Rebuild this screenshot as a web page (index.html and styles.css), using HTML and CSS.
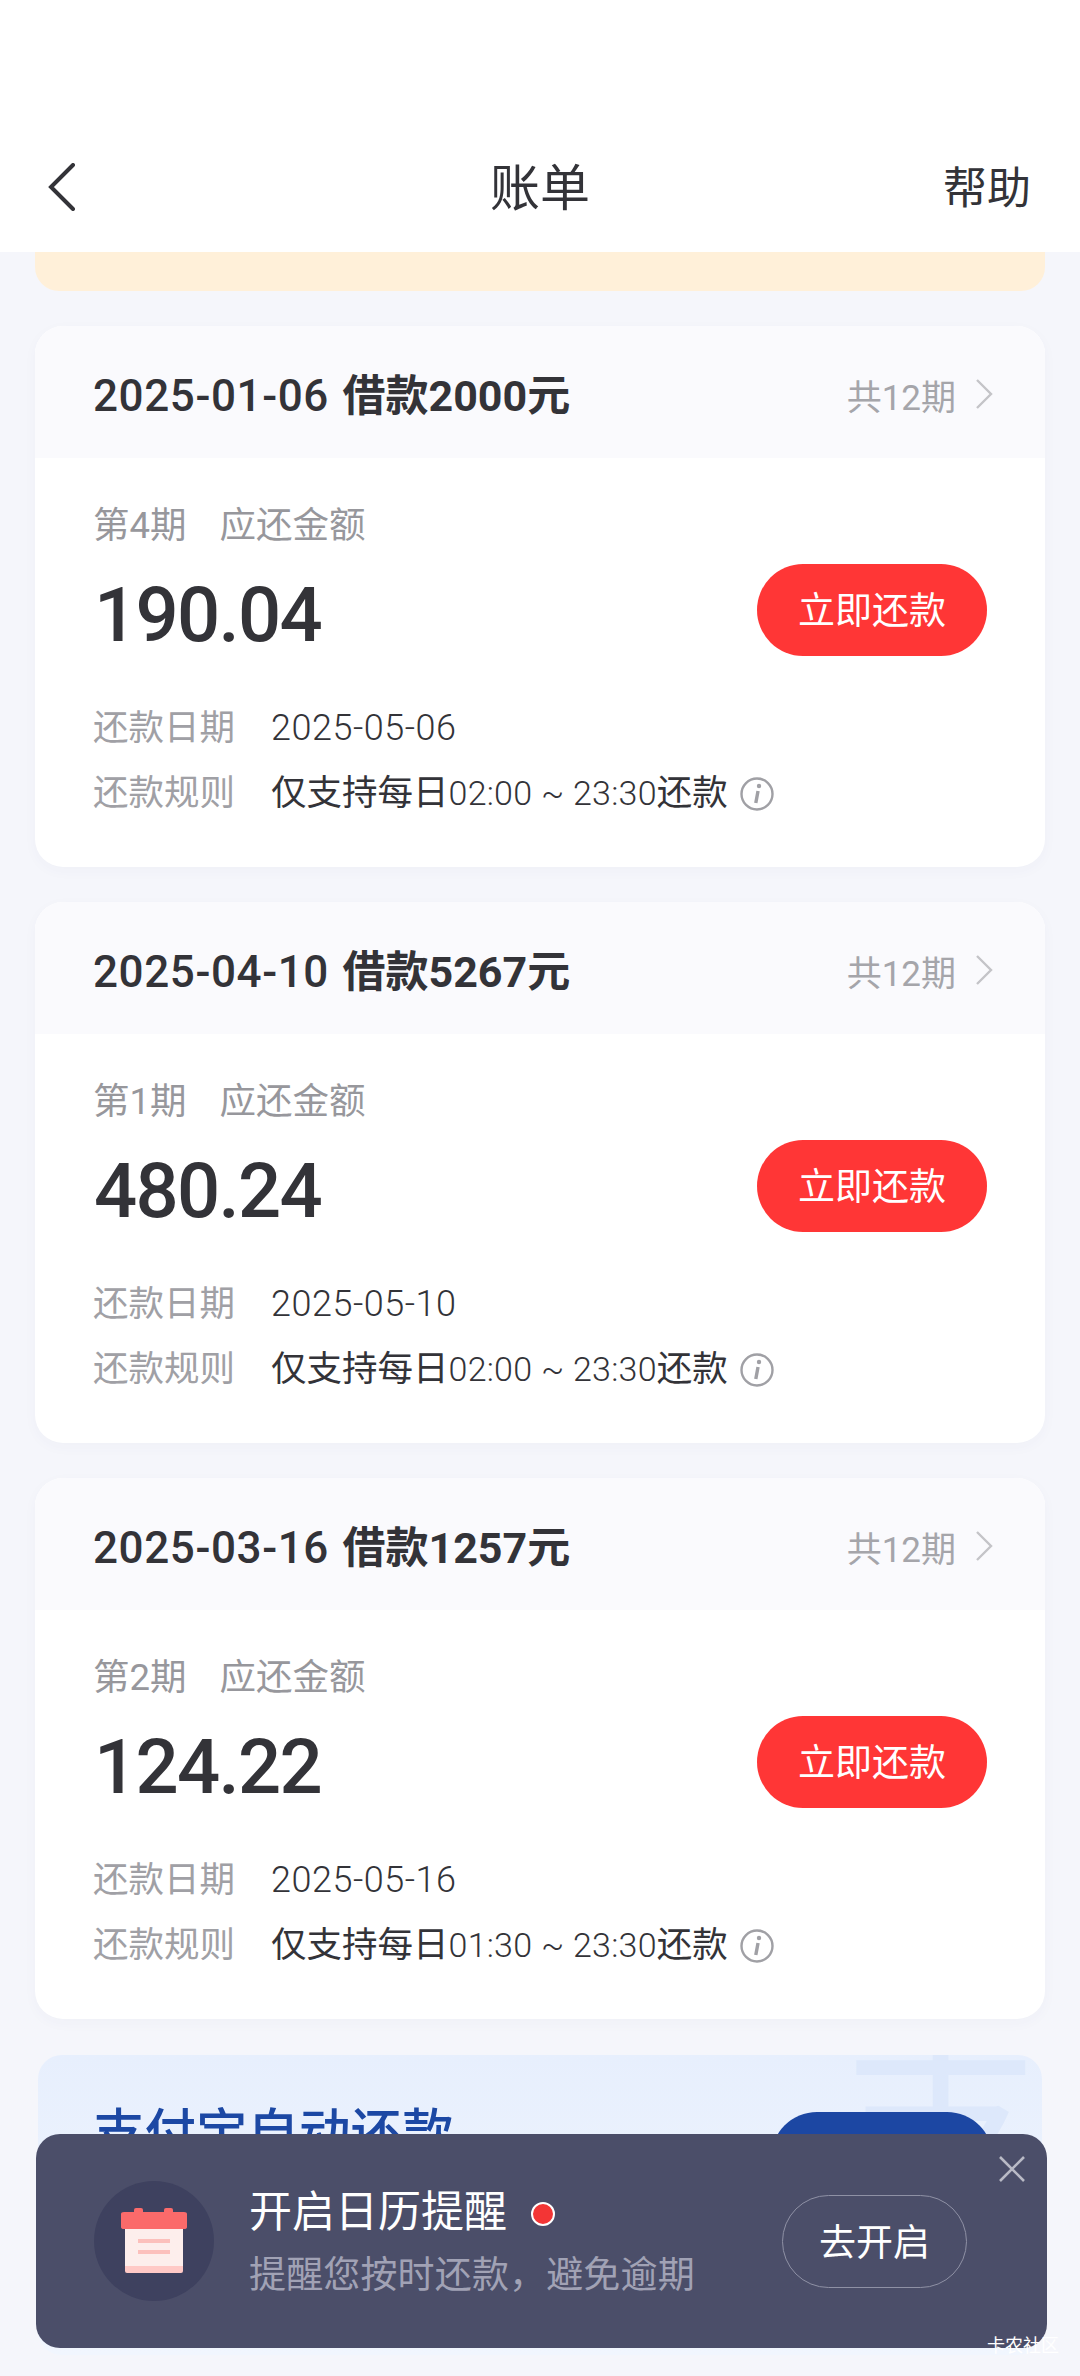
FILE: index.html
```html
<!DOCTYPE html>
<html lang="zh-CN">
  <head>
    <meta charset="UTF-8" />
    <meta name="viewport" content="width=device-width, initial-scale=1.0" />
    <title>账单</title>
    <link rel="stylesheet" href="styles.css">
  </head>
  <body>
    <div class="page">
      <header class="nav">
        <svg class="nav-back" viewBox="0 0 28 48" width="28" height="48"><path d="M25 2 L3 24 L25 46" /></svg>
        <h1 class="nav-title">账单</h1>
        <span class="nav-help">帮助</span>
      </header>

      <div class="notice"></div>

      <section class="card">
        <div class="card-head">
          <span class="loan">2025-01-06 <b>借款2000元</b></span>
          <span class="terms">共12期<svg class="chevron" viewBox="0 0 18 32" width="18" height="32"><path d="M2 2 L16 16 L2 30" /></svg></span>
        </div>
        <div class="card-body">
          <div class="due-label"><span>第4期</span><span>应还金额</span></div>
          <div class="due-row">
            <span class="amount">190.04</span>
            <button class="pay-btn">立即还款</button>
          </div>
          <div class="info-row first"><span class="info-key">还款日期</span><span class="date">2025-05-06</span></div>
          <div class="info-row">
            <span class="info-key">还款规则</span><span>仅支持每日<span class="time">02:00 ~ 23:30</span>还款</span>
            <svg class="info-icon" viewBox="0 0 34 34" width="34" height="34"><circle cx="17" cy="17" r="15.5" /><path d="M18 14 L15.8 26" /><circle class="info-dot" cx="19" cy="9" r="2.2" /></svg>
          </div>
        </div>
      </section>

      <section class="card">
        <div class="card-head">
          <span class="loan">2025-04-10 <b>借款5267元</b></span>
          <span class="terms">共12期<svg class="chevron" viewBox="0 0 18 32" width="18" height="32"><path d="M2 2 L16 16 L2 30" /></svg></span>
        </div>
        <div class="card-body">
          <div class="due-label"><span>第1期</span><span>应还金额</span></div>
          <div class="due-row">
            <span class="amount">480.24</span>
            <button class="pay-btn">立即还款</button>
          </div>
          <div class="info-row first"><span class="info-key">还款日期</span><span class="date">2025-05-10</span></div>
          <div class="info-row">
            <span class="info-key">还款规则</span><span>仅支持每日<span class="time">02:00 ~ 23:30</span>还款</span>
            <svg class="info-icon" viewBox="0 0 34 34" width="34" height="34"><circle cx="17" cy="17" r="15.5" /><path d="M18 14 L15.8 26" /><circle class="info-dot" cx="19" cy="9" r="2.2" /></svg>
          </div>
        </div>
      </section>

      <section class="card">
        <div class="card-head">
          <span class="loan">2025-03-16 <b>借款1257元</b></span>
          <span class="terms">共12期<svg class="chevron" viewBox="0 0 18 32" width="18" height="32"><path d="M2 2 L16 16 L2 30" /></svg></span>
        </div>
        <div class="card-body">
          <div class="due-label"><span>第2期</span><span>应还金额</span></div>
          <div class="due-row">
            <span class="amount">124.22</span>
            <button class="pay-btn">立即还款</button>
          </div>
          <div class="info-row first"><span class="info-key">还款日期</span><span class="date">2025-05-16</span></div>
          <div class="info-row">
            <span class="info-key">还款规则</span><span>仅支持每日<span class="time">01:30 ~ 23:30</span>还款</span>
            <svg class="info-icon" viewBox="0 0 34 34" width="34" height="34"><circle cx="17" cy="17" r="15.5" /><path d="M18 14 L15.8 26" /><circle class="info-dot" cx="19" cy="9" r="2.2" /></svg>
          </div>
        </div>
      </section>

      <section class="promo">
        <span class="promo-mark">支</span>
        <span class="promo-title">支付宝自动还款</span>
        <span class="promo-btn"></span>
      </section>

      <!-- Calendar reminder floats over the list -->
      <aside class="toast">
        <div class="toast-icon">
          <svg viewBox="0 0 66 66" width="66" height="66">
            <rect x="13" y="0" width="9" height="8" rx="2" fill="#fb6a6a" />
            <rect x="43" y="0" width="9" height="8" rx="2" fill="#fb6a6a" />
            <rect x="4" y="20" width="58" height="45" rx="2" fill="#ffc9c6" />
            <rect x="4" y="20" width="58" height="38" fill="#fdeeec" />
            <path d="M0 6 Q0 4 3 4 H63 Q66 4 66 6 V19 Q66 21 63 21 H3 Q0 21 0 19 Z" fill="#fb6a6a" />
            <rect x="17" y="31" width="32" height="4" fill="#fcc0bc" />
            <rect x="17" y="42" width="32" height="4" fill="#fcc0bc" />
          </svg>
        </div>
        <div class="toast-text">
          <div class="toast-title">开启日历提醒<span class="toast-dot"></span></div>
          <div class="toast-sub">提醒您按时还款，避免逾期</div>
        </div>
        <button class="toast-btn">去开启</button>
        <svg class="toast-close" viewBox="0 0 26 26" width="26" height="26"><path d="M1 1 L25 25 M25 1 L1 25" /></svg>
      </aside>
      <span class="watermark">卡农社区</span>
    </div>
  </body>
</html>
```

FILE: styles.css
```css
/* General Styles */
body {
  margin: 0;
  font-family: Roboto, "Noto Sans CJK SC", sans-serif;
  color: #333338;
}
.page {
  position: relative;
  height: 2376px;
  overflow: hidden;
  background: #f5f6fb;
}

/* Nav bar */
.nav {
  display: flex;
  align-items: center;
  justify-content: space-between;
  height: 252px;
  padding: 128px 49px 0 48px;
  box-sizing: border-box;
  background: #fff;
  position: relative;
}
.nav-back {
  margin-bottom: 6px;
}
.nav-back path {
  fill: none;
  stroke: #333338;
  stroke-width: 4;
  stroke-linecap: round;
}
.nav-title {
  position: absolute;
  left: 0;
  right: 0;
  top: 159px;
  margin: 0;
  text-align: center;
  font-size: 50px;
  line-height: 60px;
  font-weight: 400;
}
.nav-help {
  font-size: 44px;
  line-height: 60px;
  padding-bottom: 2px;
}

.notice {
  height: 39px;
  margin: 0 35px;
  background: #fff0d9;
  border-radius: 0 0 24px 24px;
}

/* Bill cards */
.card {
  margin: 35px 35px 0;
  background: #fff;
  border-radius: 28px;
  overflow: hidden;
  box-shadow: 0 4px 14px rgba(60, 70, 120, 0.03);
}
.card-head {
  display: flex;
  align-items: center;
  justify-content: space-between;
  height: 132px;
  padding: 0 52px 0 58px;
  background: #fafafd;
}
.loan {
  font-size: 44px;
  font-weight: 500;
  letter-spacing: 0.6px;
}
.loan b {
  margin-left: 2px;
  font-size: 43px;
  font-weight: 700;
  letter-spacing: 0;
}
.terms {
  display: flex;
  align-items: center;
  gap: 19px;
  padding-top: 4px;
  font-size: 35px;
  color: #a5a5aa;
}
.chevron path {
  fill: none;
  stroke: #c4c4c8;
  stroke-width: 2.4;
}
.card-body {
  padding: 43px 58px 41px;
}
.due-label {
  display: flex;
  gap: 33px;
  font-size: 36.5px;
  line-height: 50px;
  color: #97979c;
}
.due-row {
  display: flex;
  align-items: center;
  justify-content: space-between;
  height: 92px;
  margin-top: 13px;
}
.amount {
  padding: 10px 0 0 1px;
  font-size: 76px;
  font-weight: 500;
  letter-spacing: -1.7px;
}
.pay-btn {
  width: 230px;
  height: 92px;
  padding: 0 0 4px;
  border: none;
  border-radius: 46px;
  background: #ff3636;
  color: #fff;
  font-family: inherit;
  font-size: 37px;
}
.info-row {
  display: flex;
  align-items: center;
  font-size: 35.5px;
  line-height: 65px;
}
.info-row.first {
  margin-top: 40px;
}
.info-key {
  width: 178px;
  color: #a0a0a5;
}
.date {
  font-size: 36px;
  font-weight: 300;
  letter-spacing: 0.5px;
}
.time {
  font-size: 34px;
  font-weight: 300;
  letter-spacing: 0.25px;
}
.info-icon {
  margin-left: 12px;
}
.info-icon circle,
.info-icon path {
  fill: none;
  stroke: #a0a0a5;
  stroke-width: 2.4;
}
.info-icon path {
  stroke-width: 3.4;
}
.info-icon .info-dot {
  fill: #a0a0a5;
  stroke: none;
}

/* Alipay banner, mostly hidden by the toast */
.promo {
  position: relative;
  height: 300px;
  margin: 36px 38px 0;
  border-radius: 24px;
  overflow: hidden;
  background: linear-gradient(180deg, #e7effd, #f1f6fe);
}
.promo-mark {
  position: absolute;
  right: 1px;
  top: -5px;
  font-size: 200px;
  line-height: 160px;
  color: #dde8fb;
}
.promo-title {
  position: absolute;
  left: 55px;
  top: 44px;
  font-size: 51.5px;
  line-height: 70px;
  font-weight: 500;
  color: #1c48a4;
}
.promo-btn {
  position: absolute;
  left: 733px;
  top: 57px;
  width: 222px;
  height: 92px;
  border-radius: 46px;
  background: #1c47a3;
}

/* Calendar reminder */
.toast {
  position: absolute;
  left: 36px;
  top: 2134px;
  width: 1011px;
  height: 214px;
  display: flex;
  align-items: center;
  padding: 0 80px 0 58px;
  box-sizing: border-box;
  background: #4b4e69;
  border-radius: 24px;
}
.toast-icon {
  flex: none;
  display: flex;
  align-items: center;
  justify-content: center;
  width: 120px;
  height: 120px;
  border-radius: 50%;
  background: #3e415f;
}
.toast-text {
  flex: 1;
  margin-left: 35px;
}
.toast-title {
  display: flex;
  align-items: center;
  font-size: 43px;
  line-height: 60px;
  color: #fff;
}
.toast-dot {
  width: 20px;
  height: 20px;
  margin: 4px 0 0 24px;
  border: 2px solid #fff;
  border-radius: 50%;
  background: #f33535;
}
.toast-sub {
  margin-top: 9px;
  font-size: 37px;
  line-height: 50px;
  letter-spacing: 0.15px;
  color: #a1a2b5;
}
.toast-btn {
  flex: none;
  width: 185px;
  height: 93px;
  padding: 0 0 2px;
  border: 1px solid #8f91a5;
  border-radius: 47px;
  background: transparent;
  color: #fff;
  font-family: inherit;
  font-size: 37px;
}
.toast-close {
  position: absolute;
  right: 22px;
  top: 22px;
}
.toast-close path {
  fill: none;
  stroke: #b9bac6;
  stroke-width: 2.6;
}
.watermark {
  position: absolute;
  left: 987px;
  top: 2334px;
  font-size: 18px;
  line-height: 24px;
  color: #fff;
  white-space: nowrap;
}
```
